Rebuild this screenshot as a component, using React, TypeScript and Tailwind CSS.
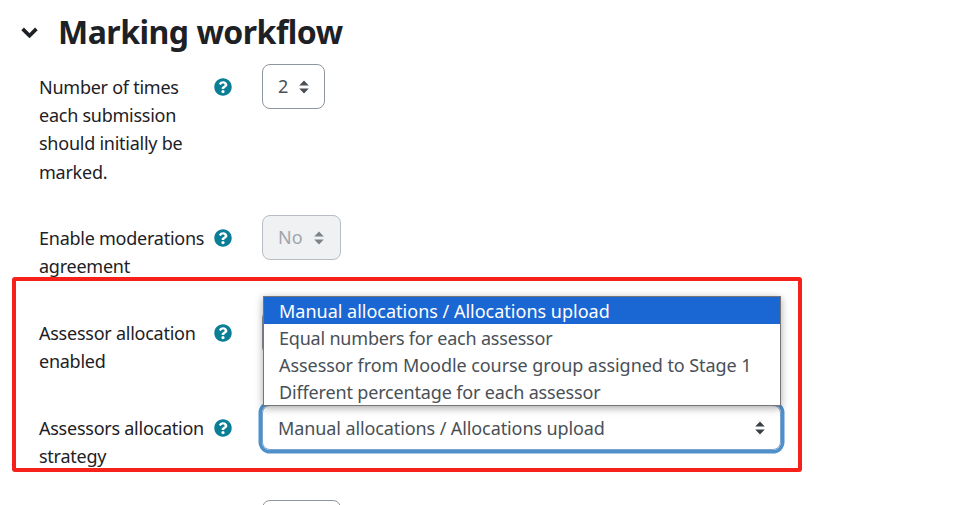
const font = "[font-family:'Noto_Sans',sans-serif]"

function HelpIcon() {
  return (
    <svg viewBox="0 0 512 512" className="w-[18px] h-[18px] shrink-0 fill-[#0a7e96]">
      <path d="M504 256c0 137-111 248-248 248S8 393 8 256 119 8 256 8s248 111 248 248zM262.700 90c-54.500 0-89.300 23-116.600 63.800-3.500 5.300-2.400 12.400 2.700 16.300l34.700 26.300c5.200 3.900 12.600 3 16.700-2.100 17.900-22.700 30.100-35.800 57.300-35.800 20.400 0 45.700 13.100 45.700 32.900 0 15-12.400 22.700-32.600 34-23.600 13.200-54.800 29.700-54.800 70.900V300c0 6.600 5.400 12 12 12h56c6.600 0 12-5.400 12-12v-1.300c0-28.600 83.500-29.800 83.500-107.200C379.300 133.200 318.800 90 262.700 90zM256 339c-25.500 0-46.200 20.700-46.200 46.200 0 25.500 20.700 46.200 46.200 46.200s46.200-20.700 46.200-46.200c0-25.500-20.700-46.200-46.200-46.200z" />
    </svg>
  )
}

function Carets({ color }: { color: string }) {
  return (
    <svg viewBox="0 0 10 14" className={`w-[10px] h-[14px] ${color}`}>
      <path d="M5 0.500 L9.800 5.600 H0.200 Z M5 13.500 L9.800 8.400 H0.200 Z" />
    </svg>
  )
}

function Row({ label, height, children }: { label: string; height: string; children: React.ReactNode }) {
  return (
    <div className={`flex ${height}`}>
      <div className="w-[262px] shrink-0 pl-[39px] pt-[9px] text-[18px] leading-[28.200px] text-[#1d2125] relative">
        <div className="w-[168px] tracking-[-0.250px]">{label}</div>
        <span className="absolute left-[214px] top-[14px]"><HelpIcon /></span>
      </div>
      <div>{children}</div>
    </div>
  )
}

export default function App() {
  return (
    <div className={`relative w-[955px] h-[505px] overflow-hidden bg-white ${font}`}>
      {/* Header */}
      <div className="flex items-center h-[64px] pl-[20px]">
        <svg viewBox="0 0 20 12" className="w-[19px] h-[11px] fill-none stroke-[#1d2125] stroke-[4]">
          <path d="M2.500 2 L10 9.500 L17.500 2" />
        </svg>
        <h2 className="ml-[19px] text-[32px] font-bold text-[#1d2125] tracking-[-0.500px] leading-none">Marking workflow</h2>
      </div>

      <div className="flex flex-col">
        <Row label="Number of times each submission should initially be marked." height="h-[151px]">
          <div className="w-[63px] h-[45px] border border-[#8f959e] rounded-[8px] flex items-center pl-[15px] gap-[11px] text-[18px] text-[#495057]">
            2 <Carets color="fill-[#495057]" />
          </div>
        </Row>
        <Row label="Enable moderations agreement" height="h-[95px]">
          <div className="w-[79px] h-[45px] border border-[#b8bdc4] bg-[#eff1f3] rounded-[8px] flex items-center pl-[15px] gap-[11px] text-[18px] text-[#a0a5ab]">
            No <Carets color="fill-[#7c848b]" />
          </div>
        </Row>
        <Row label="Assessor allocation enabled" height="h-[95px]">
          <div className="w-[79px] h-[45px] border border-[#8f959e] rounded-[8px]" />
        </Row>
        <Row label="Assessors allocation strategy" height="h-[95px]">
          <div className="w-[519px] h-[45px] border border-[#7aa5d0] ring-[3.500px] ring-[#4f90cb] rounded-[8px] flex items-center justify-between pl-[15px] pr-[15px] text-[18px] text-[#495057]">
            <span className="tracking-[-0.100px] pt-[1px]">Manual allocations / Allocations upload</span>
            <Carets color="fill-[#3a4046]" />
          </div>
        </Row>
        <div className="pl-[262px]">
          <div className="w-[79px] h-[45px] border border-[#8f959e] rounded-[8px]" />
        </div>
      </div>

      {/* Open select list */}
      <div className="absolute left-[263px] top-[296px] w-[518px] h-[110px] bg-white border border-[#767676] shadow-[0_2px_8px_rgba(0,0,0,0.35)] text-[18px] leading-[29px] text-[#495057]">
        <div className="bg-[#1a66d2] text-white pl-[15px] h-[27px]">Manual allocations / Allocations upload</div>
        <div className="pl-[15px] h-[27px] tracking-[-0.200px]">Equal numbers for each assessor</div>
        <div className="pl-[15px] h-[27px] tracking-[-0.060px]">Assessor from Moodle course group assigned to Stage 1</div>
        <div className="pl-[15px] h-[27px] tracking-[-0.160px]">Different percentage for each assessor</div>
      </div>

      {/* Annotation */}
      <div className="absolute left-[12px] top-[277px] w-[790px] h-[195px] border-[4px] border-[#f5211a] rounded-[3px] pointer-events-none" />
    </div>
  )
}
